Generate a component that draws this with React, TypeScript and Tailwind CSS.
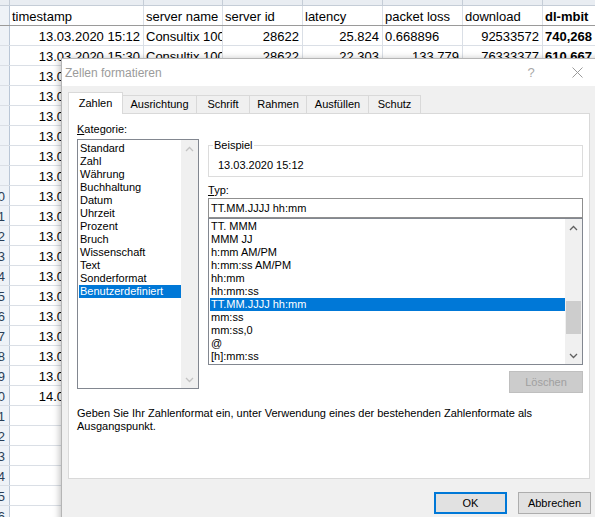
import React from "react";

const FONT = "font-['Liberation_Sans',Arial,sans-serif]";

type Cell = { text: string; right?: boolean; bold?: boolean };

const COLS = ["w-[134px]", "w-[79px]", "w-[80px]", "w-[80px]", "w-[80px]", "w-[80px]", "w-[80px]"];

function buildRows(): Cell[][] {
  const rows: Cell[][] = [
    [
      { text: "timestamp" },
      { text: "server name" },
      { text: "server id" },
      { text: "latency" },
      { text: "packet loss" },
      { text: "download" },
      { text: "dl-mbit", bold: true },
    ],
    [
      { text: "13.03.2020 15:12", right: true },
      { text: "Consultix 1000" },
      { text: "28622", right: true },
      { text: "25.824", right: true },
      { text: "0.668896" },
      { text: "92533572", right: true },
      { text: "740,268", bold: true },
    ],
    [
      { text: "13.03.2020 15:30", right: true },
      { text: "Consultix 1000" },
      { text: "28622", right: true },
      { text: "22.303", right: true },
      { text: "133.779", right: true },
      { text: "76333377", right: true },
      { text: "610.667", bold: true },
    ],
  ];
  // rows 4-19 only show column A behind the dialog
  for (let i = 4; i <= 19; i++) {
    rows.push([{ text: "13.03.2020 16:00", right: true }]);
  }
  rows.push([{ text: "14.03.2020 00:00", right: true }]);
  while (rows.length < 26) rows.push([]);
  return rows;
}

const ROWS = buildRows();

function Sheet() {
  return (
    <div className={`h-[517px] w-[595px] overflow-hidden bg-white text-[13px] text-black ${FONT}`}>
      {/* column letters band, mostly scrolled off */}
      <div className="flex h-[6px] border-b border-[#c5cdd7] bg-[#e9edf2]">
        <div className="w-[10px] shrink-0 border-r border-[#c5cdd7]" />
        {COLS.map((w, i) => (
          <div key={i} className={`${w} shrink-0 border-r border-[#c5cdd7]`} />
        ))}
      </div>
      {ROWS.map((row, r) => {
        const n = r + 1;
        return (
          <div
            key={r}
            className={`flex h-[20px] ${n === 1 ? "border-b border-[#9a9a9a]" : "border-b border-[#dadfe6]"}`}
          >
            <div className="flex w-[10px] shrink-0 justify-end overflow-hidden border-r border-[#b9c6d6] bg-[#eef2f7] pr-[4px] leading-[21px] text-[#2a3f58]">
              {n >= 10 ? String(n) : ""}
            </div>
            {COLS.map((w, c) => {
              const cell = row[c];
              return (
                <div
                  key={c}
                  className={`${w} flex shrink-0 overflow-hidden whitespace-nowrap border-r border-[#dadfe6] px-[3px] leading-[22px] ${
                    cell?.right ? "justify-end" : "pl-[2px]"
                  } ${cell?.bold ? "font-bold" : ""}`}
                >
                  {cell?.text ?? ""}
                </div>
              );
            })}
          </div>
        );
      })}
    </div>
  );
}

function Chevron({ up, color }: { up?: boolean; color: string }) {
  return (
    <svg width="9" height="6" viewBox="0 0 9 6" fill="none">
      <path
        d={up ? "M1 5 L4.5 1.5 L8 5" : "M1 1 L4.5 4.5 L8 1"}
        stroke={color}
        strokeWidth="1.3"
      />
    </svg>
  );
}

const CATEGORIES = [
  "Standard",
  "Zahl",
  "Währung",
  "Buchhaltung",
  "Datum",
  "Uhrzeit",
  "Prozent",
  "Bruch",
  "Wissenschaft",
  "Text",
  "Sonderformat",
  "Benutzerdefiniert",
];

const TYPES = [
  "TT. MMM",
  "MMM JJ",
  "h:mm AM/PM",
  "h:mm:ss AM/PM",
  "hh:mm",
  "hh:mm:ss",
  "TT.MM.JJJJ hh:mm",
  "mm:ss",
  "mm:ss,0",
  "@",
  "[h]:mm:ss",
];

const TABS = [
  { label: "Zahlen", w: "w-[55px]" },
  { label: "Ausrichtung", w: "w-[74px]" },
  { label: "Schrift", w: "w-[53px]" },
  { label: "Rahmen", w: "w-[57px]" },
  { label: "Ausfüllen", w: "w-[62px]" },
  { label: "Schutz", w: "w-[52px]" },
];

function Dialog() {
  return (
    <div
      className={`absolute left-[61px] top-[58px] h-[470px] w-[545px] border-l border-t border-[#b5b5b5] bg-[#f0f0f0] text-[11px] text-black shadow-[-2px_0_6px_rgba(0,0,0,0.22)] ${FONT}`}
    >
      {/* Titelleiste */}
      <div className="flex h-[27px] items-center bg-white">
        <span className="pl-[3px] text-[12px] text-[#9b9b9b]">Zellen formatieren</span>
        <div className="flex-1" />
        <div className="flex w-[44px] justify-center pr-[4px] text-[13px] text-[#a8a8a8]">?</div>
        <div className="flex w-[44px] justify-center">
          <svg width="11" height="11" viewBox="0 0 11 11">
            <path d="M0.5 0.5 L10.5 10.5 M10.5 0.5 L0.5 10.5" stroke="#9a9a9a" strokeWidth="1" />
          </svg>
        </div>
        <div className="w-[7px]" />
      </div>

      <div className="pl-[6px]">
        {/* Tabs */}
        <div className="mt-[6px] flex h-[21px] items-end">
          {TABS.map((t, i) =>
            i === 0 ? (
              <div
                key={t.label}
                className={`${t.w} relative z-10 mb-[-1px] flex h-[22px] items-center justify-center border-l border-r border-t border-[#d9d9d9] bg-white pb-[1px]`}
              >
                {t.label}
              </div>
            ) : (
              <div
                key={t.label}
                className={`${t.w} flex h-[18px] items-center justify-center border-r border-t border-[#d9d9d9] bg-[#f0f0f0]`}
              >
                {t.label}
              </div>
            ),
          )}
        </div>

        {/* Panel */}
        <div className="h-[366px] w-[522px] border border-[#d9d9d9] bg-white pl-[8px]">
          <div className="flex">
            {/* Kategorie */}
            <div className="w-[122px] shrink-0">
              <div className="mt-[9px] h-[13px] leading-[13px]">
                <span className="underline">K</span>ategorie:
              </div>
              <div className="mt-[3px] flex h-[250px] border border-[#828790]">
                <div className="flex-1 pl-[1px] pt-[2px]">
                  {CATEGORIES.map((c) => (
                    <div
                      key={c}
                      className={`h-[13px] px-[1px] leading-[13px] ${
                        c === "Benutzerdefiniert" ? "bg-[#0078d7] text-white" : ""
                      }`}
                    >
                      {c}
                    </div>
                  ))}
                </div>
                <div className="flex w-[17px] flex-col bg-[#f0f0f0]">
                  <div className="flex h-[17px] items-center justify-center pt-[1px]">
                    <Chevron up color="#c3c3c3" />
                  </div>
                  <div className="flex-1" />
                  <div className="flex h-[17px] items-center justify-center">
                    <Chevron color="#c3c3c3" />
                  </div>
                </div>
              </div>
            </div>

            {/* rechte Spalte */}
            <div className="ml-[9px] flex w-[375px] flex-col">
              <div className="relative mt-[31px] h-[32px] border border-[#dcdcdc] pl-[9px] pt-[13px] leading-[13px]">
                <span className="absolute left-[4px] top-[-7px] bg-white px-[1px] leading-[13px]">Beispiel</span>
                13.03.2020 15:12
              </div>
              <div className="mt-[7px] h-[13px] leading-[13px]">
                <span className="underline">T</span>yp:
              </div>
              <div className="mt-[1px] flex h-[20px] items-center border border-[#8f8f8f] pl-[2px]">
                TT.MM.JJJJ hh:mm
              </div>
              <div className="flex h-[147px] border border-[#828790]">
                <div className="flex-1 pl-[1px] pt-[1px]">
                  {TYPES.map((t) => (
                    <div
                      key={t}
                      className={`h-[13px] whitespace-nowrap px-[1px] leading-[13px] ${
                        t === "TT.MM.JJJJ hh:mm" ? "bg-[#0078d7] text-white" : ""
                      }`}
                    >
                      {t}
                    </div>
                  ))}
                </div>
                <div className="flex w-[17px] flex-col bg-[#f0f0f0]">
                  <div className="flex h-[17px] items-center justify-center">
                    <Chevron up color="#606060" />
                  </div>
                  <div className="flex-1">
                    <div className="mx-[1px] mt-[65px] h-[33px] bg-[#cdcdcd]" />
                  </div>
                  <div className="flex h-[17px] items-center justify-center">
                    <Chevron color="#606060" />
                  </div>
                </div>
              </div>
              <div className="mt-[6px] flex h-[22px] w-[74px] items-center justify-center self-end border border-[#bfbfbf] bg-[#cccccc] text-[#a0a0a0]">
                Löschen
              </div>
            </div>
          </div>

          <div className="mt-[14px] leading-[13px]">
            Geben Sie Ihr Zahlenformat ein, unter Verwendung eines der bestehenden Zahlenformate als
            <br />
            Ausgangspunkt.
          </div>
        </div>

        {/* Buttons */}
        <div className="mt-[13px] flex w-[523px] justify-end gap-[11px]">
          <div className="flex h-[22px] w-[73px] items-center justify-center border-2 border-[#0078d7] bg-[#e1e1e1]">
            OK
          </div>
          <div className="flex h-[22px] w-[73px] items-center justify-center border border-[#adadad] bg-[#e1e1e1]">
            Abbrechen
          </div>
        </div>
      </div>
    </div>
  );
}

export default function App() {
  return (
    <div className="relative h-[517px] w-[595px] overflow-hidden">
      <Sheet />
      <Dialog />
    </div>
  );
}
